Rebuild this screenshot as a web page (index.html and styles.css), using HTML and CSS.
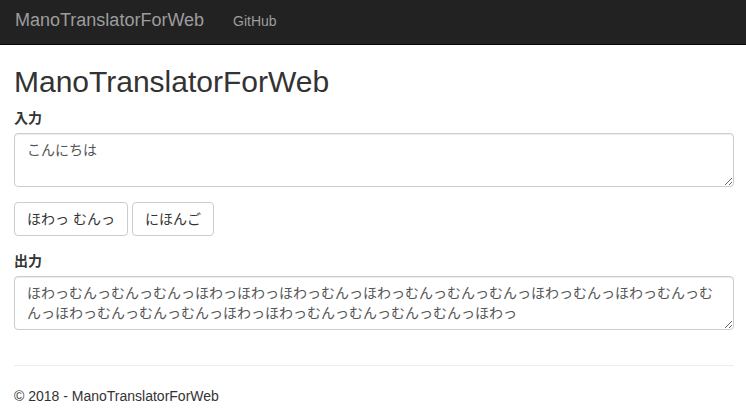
FILE: index.html
```html
<!DOCTYPE html>
<html lang="ja">
<head>
<meta charset="utf-8">
<title>ManoTranslatorForWeb</title>
<link rel="stylesheet" href="styles.css">
</head>
<body>
<nav class="navbar">
  <a class="brand" href="#">ManoTranslatorForWeb</a>
  <a class="nav-link" href="#">GitHub</a>
</nav>
<main class="container">
  <h2 class="title">ManoTranslatorForWeb</h2>
  <div class="form-group">
    <label class="label" for="input">入力</label>
    <textarea id="input" class="form-control" rows="2">こんにちは</textarea>
  </div>
  <div class="form-group buttons">
    <button class="btn" type="button">ほわっ むんっ</button>
    <button class="btn" type="button">にほんご</button>
  </div>
  <div class="form-group last">
    <label class="label" for="output">出力</label>
    <textarea id="output" class="form-control" rows="2">ほわっむんっむんっむんっほわっほわっほわっむんっほわっむんっむんっむんっほわっむんっほわっむんっむんっほわっむんっむんっむんっほわっほわっむんっむんっむんっむんっほわっ</textarea>
  </div>
  <hr class="divider">
  <footer class="footer">
    <p>© 2018 - ManoTranslatorForWeb</p>
  </footer>
</main>
</body>
</html>
```
FILE: styles.css
```css
* { box-sizing: border-box; }
html, body { margin: 0; padding: 0; }
body {
  font-family: "Liberation Sans", Arial, "Noto Sans CJK JP", sans-serif;
  font-size: 14px;
  line-height: 20px;
  color: #333;
  background: #fff;
}
.navbar {
  display: flex;
  align-items: flex-start;
  height: 45px;
  background: #222;
  border-bottom: 1px solid #080808;
  padding-left: 15px;
}
.brand {
  font-size: 18px;
  line-height: 20px;
  color: #9d9d9d;
  text-decoration: none;
  padding-top: 10px;
  padding-right: 15px;
}
.nav-link {
  font-size: 14px;
  line-height: 20px;
  color: #9d9d9d;
  text-decoration: none;
  padding: 11px 14px 0;
}
.container {
  padding: 0 12px 0 14px;
}
.title {
  font-size: 30px;
  font-weight: 500;
  line-height: 33px;
  margin: 20px 0 10px;
  color: #333;
}
.form-group { margin-bottom: 15px; }
.form-group.last { margin-bottom: 0; }
.label {
  display: block;
  font-weight: bold;
  margin-bottom: 5px;
}
.form-control {
  display: block;
  width: 100%;
  height: 54px;
  padding: 6px 12px;
  font-family: inherit;
  font-size: 14px;
  line-height: 20px;
  color: #555;
  background: #fff;
  border: 1px solid #ccc;
  border-radius: 4px;
  box-shadow: inset 0 1px 1px rgba(0,0,0,.075);
  margin: 0;
}
.buttons {
  display: flex;
  gap: 4px;
}
.btn {
  height: 34px;
  padding: 6px 12px;
  font-family: inherit;
  font-size: 14px;
  line-height: 20px;
  color: #333;
  background: #fff;
  border: 1px solid #ccc;
  border-radius: 4px;
  cursor: pointer;
}
.divider {
  margin: 35px 0 20px;
  border: 0;
  border-top: 1px solid #eee;
}
.footer p { margin: 0 0 10px; }
```
